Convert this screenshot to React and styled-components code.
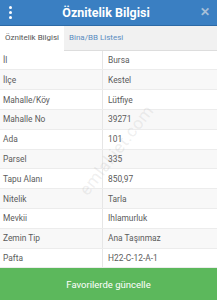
import React from 'react';
import styled, { createGlobalStyle } from 'styled-components';

const GlobalStyle = createGlobalStyle`
html, body { margin:0; padding:0; background:#fff; }
body { font-family: Roboto, "Liberation Sans", Arial, sans-serif; }
`

const Page = styled.div`
width:217px;
height:300px;
display:flex;
flex-direction:column;
overflow:hidden;
position:relative;
background:#fff;
`

const Header = styled.div`
height:25px;
display:flex;
align-items:center;
justify-content:space-between;
padding:0 7px 0 9px;
background-color:#3a7fc2;
border-bottom:1px solid #2c6aa6;
`

const Title = styled.div`
color:#fff;
font-size:12.5px;
font-weight:bold;
`

const Dots = styled.div`
display:flex;
flex-direction:column;
gap:2px;
span{
  width:3px;
  height:3px;
  border-radius:50%;
  background:#fff;
}
`

const Close = styled.div`
color:#a6bfd8;
font-size:12px;
font-weight:bold;
width:10px;
text-align:center;
`

const Tabs = styled.div`
height:25px;
display:flex;
background:#f1f1f1;
`

const Tab = styled.div`
display:flex;
align-items:center;
padding:0 5px;
font-size:8px;
color:${p => p.active ? '#555' : '#5a8cbf'};
background:${p => p.active ? '#fff' : 'transparent'};
border-bottom:1px solid ${p => p.active ? '#fff' : '#ddd'};
flex:${p => p.active ? '0 0 auto' : '1'};
`

const Table = styled.div`
display:flex;
flex-direction:column;
flex:1;
`

const Row = styled.div`
height:19.8px;
display:grid;
grid-template-columns:102px 1fr;
background:${p => p.odd ? '#f8f8f8' : '#fff'};
border-bottom:1px solid #ececec;
box-sizing:border-box;
`

const Cell = styled.div`
display:flex;
align-items:center;
font-size:8.4px;
color:#5b5b5b;
padding-left:${p => p.right ? '5px' : '3px'};
border-left:${p => p.right ? '1px solid #e6e6e6' : 'none'};
`

const Button = styled.div`
height:32px;
display:flex;
align-items:center;
justify-content:center;
background:#5cb85c;
color:#fff;
font-size:9.5px;
`

const Watermark = styled.div`
position:absolute;
left:62px;
top:140px;
transform:rotate(-52deg);
font-size:17px;
color:rgba(160,160,160,0.18);
letter-spacing:0.5px;
pointer-events:none;
`

const rows = [
  ['İl', 'Bursa'],
  ['İlçe', 'Kestel'],
  ['Mahalle/Köy', 'Lütfiye'],
  ['Mahalle No', '39271'],
  ['Ada', '101'],
  ['Parsel', '335'],
  ['Tapu Alanı', '850,97'],
  ['Nitelik', 'Tarla'],
  ['Mevkii', 'Ihlamurluk'],
  ['Zemin Tip', 'Ana Taşınmaz'],
  ['Pafta', 'H22-C-12-A-1'],
]

export default function App() {
  return (
    <Page>
      <GlobalStyle />
      <Header>
        <Dots><span /><span /><span /></Dots>
        <Title>Öznitelik Bilgisi</Title>
        <Close>✕</Close>
      </Header>
      <Tabs>
        <Tab active>Öznitelik Bilgisi</Tab>
        <Tab>Bina/BB Listesi</Tab>
      </Tabs>
      <Table>
        {rows.map((r, i) => (
          <Row key={r[0]} odd={i % 2 === 1}>
            <Cell>{r[0]}</Cell>
            <Cell right>{r[1]}</Cell>
          </Row>
        ))}
      </Table>
      <Button>Favorilerde güncelle</Button>
      <Watermark>emlakjet.com</Watermark>
    </Page>
  );
}
